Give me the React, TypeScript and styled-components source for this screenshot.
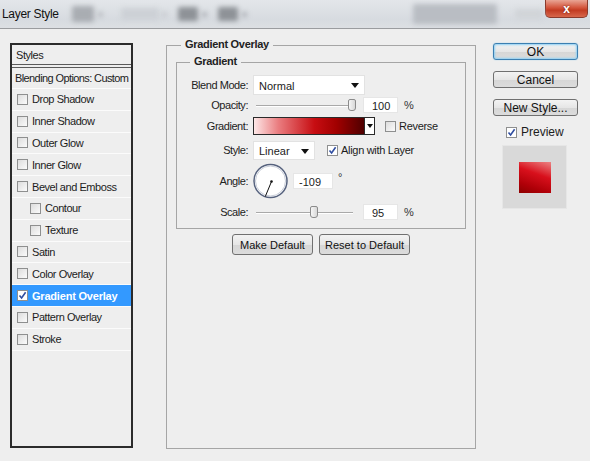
import React from "react";
import styled, { createGlobalStyle, css } from "styled-components";

const Global = createGlobalStyle`
  html, body {
    margin: 0;
    padding: 0;
    background: #eeeeee;
  }
  body {
    font-family: "Liberation Sans", Arial, sans-serif;
    font-size: 11px;
    color: #1c1c1c;
  }
  * { box-sizing: border-box; }
`;

const Window = styled.div`
  width: 590px;
  height: 461px;
  overflow: hidden;
  background: #eeeeee;
`;

const TitleBar = styled.div`
  height: 29px;
  display: flex;
  align-items: flex-start;
  background: linear-gradient(#e3e6ea, #d7dbe0 70%, #dcdfe3);
  border-bottom: 1px solid #9a9c9f;
  overflow: hidden;
`;

const Title = styled.div`
  padding: 7px 0 0 2px;
  width: 66px;
  font-size: 12px;
  letter-spacing: -0.3px;
  color: #111;
`;

const Ghost = styled.div<{ $w: number; $h: number; $c: string; $ml: number; $mt: number }>`
  width: ${(p) => p.$w}px;
  height: ${(p) => p.$h}px;
  margin: ${(p) => p.$mt}px 0 0 ${(p) => p.$ml}px;
  background: ${(p) => p.$c};
  filter: blur(2.5px);
  border-radius: 2px;
  flex-shrink: 0;
`;

const Close = styled.div`
  margin-left: auto;
  margin-right: 2px;
  width: 43px;
  height: 18px;
  border: 1px solid #8a3a2c;
  border-top: none;
  border-radius: 0 0 5px 5px;
  background: linear-gradient(#e9a594, #d3553c 45%, #c23b22 60%, #d7674b);
  color: #fff;
  font-weight: bold;
  font-size: 12px;
  display: flex;
  align-items: center;
  justify-content: center;
  text-shadow: 0 0 2px #6b1a0c;
`;

const Body = styled.div`
  display: flex;
  align-items: flex-start;
  padding: 14px 0 0 10px;
`;

const StylesPanel = styled.div`
  width: 123px;
  height: 405px;
  border: 2px solid #2b2b2b;
  background: #eeeeee;
  letter-spacing: -0.45px;
  white-space: nowrap;
`;

const PanelHeader = styled.div`
  height: 23px;
  padding: 4px 0 0 4px;
  border-bottom: 4px double #5a5a5a;
`;

const BlendRow = styled.div`
  height: 21px;
  padding: 4px 0 0 3px;
  letter-spacing: -0.6px;
  border-bottom: 1px solid #fbfbfb;
`;

const StyleRow = styled.div<{ $indent?: boolean; $active?: boolean }>`
  height: 21.8px;
  display: flex;
  align-items: center;
  padding-left: ${(p) => (p.$indent ? 18 : 5)}px;
  border-bottom: 1px solid #fbfbfb;
  gap: 4px;
  ${(p) =>
    p.$active &&
    css`
      background: #3399ff;
      color: #fff;
      font-weight: bold;
      letter-spacing: -0.2px;
    `}
`;

const Box = styled.span<{ $light?: boolean }>`
  width: 11px;
  height: 11px;
  flex-shrink: 0;
  display: inline-flex;
  align-items: center;
  justify-content: center;
  border: 1px solid #8e8f8f;
  background: ${(p) => (p.$light ? "#ffffff" : "linear-gradient(135deg, #dcdcdc, #fbfbfb)")};
`;

const Check = ({ on, light }: { on?: boolean; light?: boolean }) => (
  <Box $light={light || on}>
    {on && (
      <svg width="9" height="9" viewBox="0 0 9 9">
        <path d="M1.5 4.5 L3.6 7 L7.6 1.2" fill="none" stroke="#2f4da0" strokeWidth="1.6" />
      </svg>
    )}
  </Box>
);

const Group = styled.div`
  position: relative;
  margin: 2px 0 0 33px;
  width: 310px;
  height: 404px;
  border: 1px solid #a5a5a5;
  padding: 16px 9px 0 9px;
`;

const Legend = styled.span<{ $left: number }>`
  position: absolute;
  top: -8px;
  left: ${(p) => p.$left}px;
  padding: 0 4px;
  background: #eeeeee;
  font-weight: bold;
  letter-spacing: -0.3px;
  color: #222;
`;

const Inner = styled.div`
  position: relative;
  height: 167px;
  border: 1px solid #a5a5a5;
  padding-top: 11px;
`;

const Row = styled.div<{ $h: number }>`
  height: ${(p) => p.$h}px;
  display: flex;
  align-items: center;
`;

const Label = styled.div`
  width: 71px;
  margin-right: 5px;
  text-align: right;
  letter-spacing: -0.45px;
  color: #222;
`;

const Select = styled.div<{ $w: number; $h: number }>`
  width: ${(p) => p.$w}px;
  height: ${(p) => p.$h}px;
  background: #fff;
  border: 1px solid #e2e2e2;
  display: flex;
  align-items: center;
  padding: 2px 5px 0 5px;
  justify-content: space-between;
`;

const Arrow = styled.span`
  width: 0;
  height: 0;
  border-left: 4px solid transparent;
  border-right: 4px solid transparent;
  border-top: 5px solid #111;
`;

const Track = styled.div`
  position: relative;
  width: 97px;
  height: 12px;
  margin: 0 10px 0 3px;
  &::before {
    content: "";
    position: absolute;
    left: 0;
    right: 0;
    top: 6px;
    height: 1px;
    background: #a9a9a9;
    box-shadow: 0 1px 0 #ffffff;
  }
`;

const Thumb = styled.div`
  position: absolute;
  top: 0;
  width: 8px;
  height: 12px;
  margin-left: -4px;
  border: 1px solid #8b8b8b;
  border-radius: 2px 2px 3px 3px;
  background: linear-gradient(90deg, #f6f6f6, #d8d8d8);
`;

const Field = styled.div<{ $w: number; $pl?: number; $ml?: number }>`
  width: ${(p) => p.$w}px;
  height: 16px;
  margin-left: ${(p) => p.$ml ?? 0}px;
  background: #fff;
  border: 1px solid #e6e6e6;
  padding: 2px 0 0 ${(p) => p.$pl ?? 8}px;
`;

const Unit = styled.span<{ $ml: number; $raise?: boolean }>`
  margin-left: ${(p) => p.$ml}px;
  color: #333;
  ${(p) => p.$raise && "align-self: flex-start; margin-top: 9px;"}
`;

const GradientBar = styled.div`
  display: flex;
  height: 18px;
  border: 1px solid #2a2a2a;
  margin-right: 10px;
`;

const GradientFill = styled.div`
  width: 110px;
  background: linear-gradient(90deg, #fde7e7 0%, #ea7d80 22%, #c70d12 55%, #a10000 75%, #4f0000 100%);
`;

const GradientButton = styled.div`
  width: 10px;
  border-left: 1px solid #2a2a2a;
  background: #fff;
  display: flex;
  align-items: center;
  justify-content: center;
  & > span {
    border-left-width: 3px;
    border-right-width: 3px;
    border-top-width: 4px;
  }
`;

const CheckLabel = styled.label<{ $ml: number }>`
  display: flex;
  align-items: center;
  gap: 3px;
  margin-left: ${(p) => p.$ml}px;
  letter-spacing: -0.3px;
`;

const Buttons = styled.div`
  display: flex;
  justify-content: center;
  gap: 6px;
  margin-top: 5px;
`;

const Btn = styled.div<{ $w: number; $default?: boolean; $fs?: number }>`
  width: ${(p) => p.$w}px;
  height: ${(p) => (p.$default ? 17 : 21)}px;
  border: 1px solid ${(p) => (p.$default ? "#3c7fb1" : "#707070")};
  border-radius: 3px;
  background: linear-gradient(#f3f3f3, #e6e6e6 50%, #d6d6d6 51%, #dcdcdc);
  display: flex;
  align-items: center;
  justify-content: center;
  font-size: ${(p) => p.$fs ?? 11}px;
  color: #111;
  ${(p) => p.$default && "box-shadow: 0 0 2px 1px #8fd0f4 inset, 0 0 1px #5fb3e6;"}
`;

const Side = styled.div`
  margin-left: 17px;
  width: 85px;
  display: flex;
  flex-direction: column;
  gap: 11px;
  & > ${Btn} {
    height: 17px;
  }
`;

const PreviewRow = styled.label`
  display: flex;
  align-items: center;
  gap: 4px;
  margin: -2px 0 0 13px;
  font-size: 12px;
`;

const PreviewBox = styled.div`
  width: 65px;
  height: 64px;
  margin: -5px 0 0 9px;
  background: #d9d9d9;
  border: 1px solid #e6e6e6;
  display: flex;
  align-items: center;
  justify-content: center;
`;

const Swatch = styled.div`
  width: 32px;
  height: 31px;
  background: linear-gradient(200deg, #ec8383 0%, #d8101c 40%, #b00008 75%, #8d0000 100%);
`;

const Dial = () => (
  <svg width="36" height="38" viewBox="0 0 36 38" style={{ flexShrink: 0 }}>
    <circle cx="17.5" cy="19" r="16.5" fill="#ffffff" stroke="#56627e" strokeWidth="1.5" />
    <circle cx="17.5" cy="19" r="15" fill="none" stroke="#c8cdd8" strokeWidth="1" />
    <line x1="18.5" y1="19.5" x2="12.3" y2="34.5" stroke="#111" strokeWidth="1" />
    <circle cx="18.5" cy="19.5" r="1.3" fill="#111" />
  </svg>
);

const styles: { name: string; indent?: boolean; active?: boolean }[] = [
  { name: "Drop Shadow" },
  { name: "Inner Shadow" },
  { name: "Outer Glow" },
  { name: "Inner Glow" },
  { name: "Bevel and Emboss" },
  { name: "Contour", indent: true },
  { name: "Texture", indent: true },
  { name: "Satin" },
  { name: "Color Overlay" },
  { name: "Gradient Overlay", active: true },
  { name: "Pattern Overlay" },
  { name: "Stroke" },
];

const Slider = ({ pos }: { pos: number }) => (
  <Track>
    <Thumb style={{ left: `${pos * 100}%` }} />
  </Track>
);

export default function App() {
  return (
    <Window>
      <Global />
      <TitleBar>
        <Title>Layer Style</Title>
        <Ghost $w={22} $h={16} $c="#a9adb2" $ml={6} $mt={6} />
        <Ghost $w={5} $h={5} $c="#b3b7bc" $ml={4} $mt={12} />
        <Ghost $w={38} $h={12} $c="#cdd1d6" $ml={18} $mt={8} />
        <Ghost $w={5} $h={5} $c="#c3c7cc" $ml={3} $mt={12} />
        <Ghost $w={20} $h={14} $c="#8e9297" $ml={11} $mt={7} />
        <Ghost $w={5} $h={5} $c="#a6aaaf" $ml={4} $mt={12} />
        <Ghost $w={20} $h={14} $c="#8e9297" $ml={11} $mt={7} />
        <Ghost $w={5} $h={5} $c="#a6aaaf" $ml={4} $mt={12} />
        <Ghost $w={84} $h={20} $c="#b9bdc3" $ml={166} $mt={4} />
        <Ghost $w={28} $h={10} $c="#d1d4d8" $ml={18} $mt={9} />
        <Close>x</Close>
      </TitleBar>
      <Body>
        <StylesPanel>
          <PanelHeader>Styles</PanelHeader>
          <BlendRow>Blending Options: Custom</BlendRow>
          {styles.map((s) => (
            <StyleRow key={s.name} $indent={s.indent} $active={s.active}>
              <Check on={s.active} />
              {s.name}
            </StyleRow>
          ))}
        </StylesPanel>

        <Group>
          <Legend $left={14}>Gradient Overlay</Legend>
          <Inner>
            <Legend $left={13}>Gradient</Legend>
            <Row $h={21}>
              <Label>Blend Mode:</Label>
              <Select $w={112} $h={20}>
                Normal <Arrow />
              </Select>
            </Row>
            <Row $h={19}>
              <Label>Opacity:</Label>
              <Slider pos={0.99} />
              <Field $w={35}>100</Field>
              <Unit $ml={6}>%</Unit>
            </Row>
            <Row $h={24}>
              <Label>Gradient:</Label>
              <GradientBar>
                <GradientFill />
                <GradientButton>
                  <Arrow />
                </GradientButton>
              </GradientBar>
              <CheckLabel $ml={0}>
                <Check />
                Reverse
              </CheckLabel>
            </Row>
            <Row $h={24}>
              <Label>Style:</Label>
              <Select $w={62} $h={19}>
                Linear <Arrow />
              </Select>
              <CheckLabel $ml={12}>
                <Check on />
                Align with Layer
              </CheckLabel>
            </Row>
            <Row $h={38}>
              <Label>Angle:</Label>
              <Dial />
              <Field $w={40} $ml={4} $pl={5}>
                -109
              </Field>
              <Unit $ml={5} $raise>
                °
              </Unit>
            </Row>
            <Row $h={24}>
              <Label>Scale:</Label>
              <Slider pos={0.6} />
              <Field $w={35}>95</Field>
              <Unit $ml={6}>%</Unit>
            </Row>
          </Inner>
          <Buttons>
            <Btn $w={81}>Make Default</Btn>
            <Btn $w={91}>Reset to Default</Btn>
          </Buttons>
        </Group>

        <Side>
          <Btn $w={85} $default $fs={12}>
            OK
          </Btn>
          <Btn $w={85} $fs={12}>
            Cancel
          </Btn>
          <Btn $w={85} $fs={12}>
            New Style...
          </Btn>
          <PreviewRow>
            <Check on />
            Preview
          </PreviewRow>
          <PreviewBox>
            <Swatch />
          </PreviewBox>
        </Side>
      </Body>
    </Window>
  );
}
